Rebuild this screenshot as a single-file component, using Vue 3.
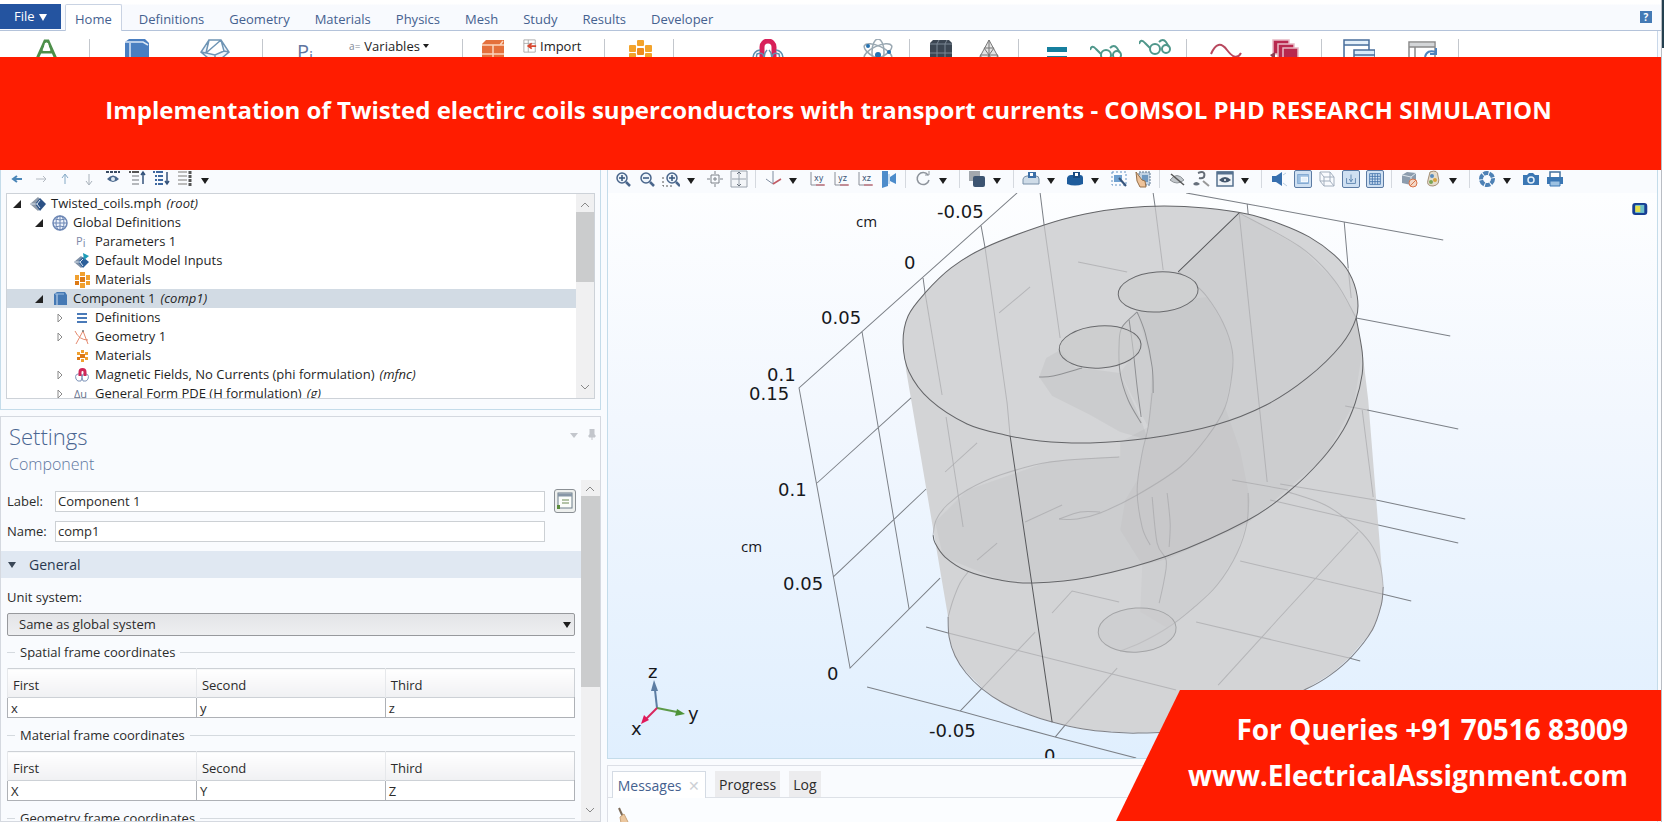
<script setup>
import { ref } from 'vue'

const tabs = ['Home', 'Definitions', 'Geometry', 'Materials', 'Physics', 'Mesh', 'Study', 'Results', 'Developer']

const art = {
  geomA: '<path d="M7 20L15 2h3l8 18M11 13h11" fill="none" stroke="#4d8f4a" stroke-width="3"/><path d="M15 4l-2 8h7l-2-8" fill="#fff"/>',
  cube: '<path d="M4 3l4-3h16l4 4v20H4z" fill="#4a7fc1"/><path d="M4 3h18l5 3M9 4v20" stroke="#dbe8f6" stroke-width="1.5" fill="none"/>',
  diamond: '<path d="M10 1h12l8 12-14 12L2 13zM10 1l-3 13 9 2 9-4-3-11M7 14l-5-1M25 12l5 1M7 14L22 1M16 16v8" fill="#eef5fb" stroke="#6f95b5" stroke-width="1.5"/>',
  brick: '<path d="M5 5l4-4h18v24H5z" fill="#e4703c"/><path d="M5 6h22M16 6v16M5 15h22M23 6l3-4" stroke="#fbd5bd" stroke-width="1.5" fill="none"/>',
  import: '<path d="M1 1h13v14H1zM1 5h13M6 1v14" fill="#fff" stroke="#a8a8a8"/><path d="M15 8H7m3-3L6 8l4 3" stroke="#d8472f" stroke-width="2" fill="none"/>',
  mats: '<g fill="#f3a32b"><rect x="12" y="1" width="7" height="6" rx="1"/><rect x="4" y="6" width="7" height="7" rx="1"/><rect x="20" y="6" width="7" height="7" rx="1"/><rect x="12" y="9" width="7" height="7" rx="1" fill="#ee8b1d"/><rect x="4" y="14" width="7" height="8" rx="1"/><rect x="20" y="14" width="7" height="8" rx="1"/></g>',
  magnet: '<path d="M10 20V8a6 6 0 0 1 12 0v12" fill="none" stroke="#d8215a" stroke-width="5"/><path d="M8 11Q1 12 1 20M24 11q7 1 7 9M12 20q0-8-7-5-1 3 0 6M20 20q0-8 7-5 1 3 0 6M15 11q-4 4-2 10M17 11q4 4 2 10" stroke="#5f8fae" stroke-width="1.5" fill="none"/>',
  atom: '<g fill="none" stroke="#9aa8b2" stroke-width="1.5"><ellipse cx="16" cy="13" rx="6" ry="13"/><ellipse cx="16" cy="13" rx="6" ry="15" transform="rotate(65 16 13)"/><ellipse cx="16" cy="13" rx="6" ry="15" transform="rotate(-65 16 13)"/></g><g fill="#2471b0"><circle cx="6" cy="7" r="2"/><circle cx="27" cy="13" r="2"/><circle cx="16" cy="16" r="3"/></g>',
  darkCube: '<path d="M5 4l3-3h16l3 3v20H5z" fill="#3b4652"/><path d="M5 5h22M12 5v18M20 5v18M12 5l2-4M20 5l2-4M5 14h22" stroke="#7b8794" fill="none"/>',
  tri: '<path d="M16 1L3 25h26zM16 1v24M11 9h10M7 16h18M11 9l5 7 5-7M7 16l5 8 4-8 5 8 4-8" fill="#e4e4e4" stroke="#777"/>',
  equal: '<rect x="6" y="8" width="20" height="5" fill="#167f9e"/><rect x="6" y="17" width="20" height="5" fill="#167f9e"/>',
  glasses: '<g fill="none" stroke="#4f978b" stroke-width="2"><circle cx="16" cy="10" r="5"/><circle cx="27" cy="10" r="4"/><path d="M0 5q2-6 6-1l5 5M20 3q4-4 7 0l3 5"/></g>',
  glassesLow: '<g fill="none" stroke="#4f978b" stroke-width="2"><circle cx="16" cy="16" r="5"/><circle cx="27" cy="16" r="4"/><path d="M0 11q2-6 6-1l5 5M20 9q4-4 7 0l3 5"/></g>',
  sine: '<path d="M1 15Q8-1 17 11t14 3" fill="none" stroke="#b8485e" stroke-width="2"/>',
  stack: '<g fill="#b8284e" stroke="#e7b9c5" stroke-width="1.5"><rect x="4" y="1" width="16" height="14"/><rect x="9" y="5" width="16" height="14"/><rect x="14" y="9" width="15" height="14"/></g><path d="M1 16l5-3v8z" fill="#8c4053"/>',
  windows: '<g fill="#fff" stroke="#4a6f9c" stroke-width="1.5"><path d="M1 1h25v20H1zM1 6h25" fill="#e4f0fa"/><path d="M2 7h23v14H2z" stroke="none"/><path d="M11 11h21v14H11zM11 16h21" fill="#d8eafa"/></g>',
  reset: '<path d="M2 3h26v22H2z" fill="#fff" stroke="#8b8b8b" stroke-width="1.5"/><path d="M3 4h24v4H3z" fill="#d4d6d8"/><path d="M2 8h26M8 8v17" stroke="#8b8b8b" stroke-width="1.5"/><path d="M18 18q2-8 11-5m0-4v6h-6" fill="none" stroke="#4d83bd" stroke-width="2"/>'
}

const ribbon = [
  { cls: 'g-center', icons: ['geomA'] },
  { cls: 'g-geo', icons: ['cube', 'diamond'] },
  { cls: 'g-vars', pi: true, variables: true, icons: [] },
  { cls: 'g-imp', icons: ['brick'], imp: true },
  { cls: 'g-mat', icons: ['mats'] },
  { cls: 'g-phys', icons: ['magnet', 'atom'] },
  { cls: 'g-mesh', icons: ['darkCube', 'tri'] },
  { cls: 'g-study', icons: ['equal', 'glassesLow', 'glasses'] },
  { cls: 'g-res', icons: ['sine', 'stack'] },
  { cls: 'g-win', icons: ['windows', 'reset'] }
]

const lens = '<circle cx="8" cy="8" r="5" fill="#eef4fa" stroke="#4a668c" stroke-width="1.5"/><path d="M12 12l4 4" stroke="#4a668c" stroke-width="2.5"/>'
const planeIcon = (t) => `<path d="M3 2v13h13" fill="none" stroke="#8a8f99" stroke-width="1"/><path d="M8 15h9" stroke="#c05560" stroke-width="1"/><text x="6" y="11" font-size="8" font-family="DejaVu Sans, sans-serif" fill="#3b5577">${t}</text>`
const small = {
  back: '<path d="M14 9H5m4-3L5 9l4 3" fill="none" stroke="#4b86b8" stroke-width="2"/>',
  fwd: '<path d="M4 9h10m-3-3l3 3-3 3" fill="none" stroke="#b4bac2" stroke-width="1"/>',
  up: '<path d="M9 14V5m-3 3l3-4 3 4" fill="none" stroke="#84a9c6" stroke-width="1"/>',
  down: '<path d="M9 4v10m-3-3l3 4 3-4" fill="none" stroke="#a9b2bb" stroke-width="1"/>',
  show: '<path d="M2 2h14" stroke="#3a4c63" stroke-width="2" stroke-dasharray="3 1"/><path d="M3 9q6-7 12 0-6 6-12 0z" fill="#4a678c"/><circle cx="9" cy="9" r="2" fill="#dfe9f3"/>',
  collapse: '<path d="M1 2h10" stroke="#555" stroke-width="2" stroke-dasharray="2 1 9 0"/><path d="M4 6h7M4 10h7M4 14h7" stroke="#b5b8bc" stroke-width="2"/><path d="M15 14V2m-2 3l2-3 2 3" fill="none" stroke="#36547c" stroke-width="1.5"/>',
  expand: '<path d="M1 2h10M3 6h8M3 10h8M3 14h8" stroke="#3e68a0" stroke-width="2" stroke-dasharray="2 1 9 0"/><path d="M15 2v12m-2-3l2 3 2-3" fill="none" stroke="#36547c" stroke-width="1.5"/>',
  list: '<path d="M2 2h9M2 6h9M2 10h9M2 14h9" stroke="#bbb" stroke-width="2"/><path d="M14 1v15" stroke="#555" stroke-width="3" stroke-dasharray="3 1"/>',
  zin: lens + '<path d="M5 8h6M8 5v6" stroke="#36547c" stroke-width="1.5"/>',
  zout: lens + '<path d="M5 8h6" stroke="#36547c" stroke-width="1.5"/>',
  zbox: '<path d="M1 7v9h10" fill="none" stroke="#555" stroke-dasharray="2 2"/><g transform="translate(2 0)">' + lens + '<path d="M5 8h6M8 5v6" stroke="#36547c" stroke-width="1.5"/></g>',
  ext: '<path d="M5 5h8v8H5zM9 1v3M9 14v3M1 9h3M14 9h3M7 9h4M9 7v4" fill="none" stroke="#7c8188"/>',
  fit: '<path d="M1 1h16v16H1zM9 2v14M2 9h14" fill="#f3f5f8" stroke="#9aa2ac" stroke-width="1"/><path d="M7 4l2-2 2 2M7 14l2 2 2-2" fill="none" stroke="#6b7480"/>',
  axes: '<path d="M9 1v12M9 14L2 9" stroke="#7f8ca0" fill="none"/><path d="M9 14l8-5" stroke="#c25a64" stroke-width="1.5"/>',
  xy: planeIcon('xy'), yz: planeIcon('yz'), xz: planeIcon('xz'),
  mirror: '<path d="M2 1h6v15l-6 2zM10 7l6-4v11l-6-3z" fill="#4d8ccb"/><path d="M9 4v10" stroke="#9cc3e6"/>',
  rot: '<path d="M14 5a6 6 0 1 0 1 5" fill="none" stroke="#8e949c" stroke-width="1.5"/><path d="M11 5h4V1" fill="none" stroke="#8e949c"/>',
  layers: '<rect x="1" y="1" width="11" height="10" fill="#a3a8ae"/><rect x="5" y="6" width="12" height="11" rx="2" fill="#3d5471"/>',
  tray: '<path d="M1 9q1-3 4-3h9q3 0 3 3v5H1z" fill="#cfdce8" stroke="#7990a8"/><path d="M6 2h8v6H6z" fill="#3c6fa8"/><path d="M8 3h3v3H8z" fill="#fff"/>',
  db: '<path d="M1 8q1-3 4-3h9q3 0 3 3v6q-8 3-16 0z" fill="#1e5c9c"/><path d="M7 2h7v6H7z" fill="#174a82"/><path d="M9 3h3v3H9z" fill="#fff"/>',
  sel: '<path d="M2 2h14v13H2z" fill="none" stroke="#6593c4" stroke-dasharray="2 2"/><rect x="4" y="5" width="8" height="7" fill="#6fa0d0"/><path d="M9 8l7 8" stroke="#36547c" stroke-width="2"/>',
  hand: '<path d="M5 2h11v13H5z" fill="#c3d3e3" stroke="#5c7690" stroke-dasharray="2 1"/><path d="M8 5h6v7H8z" fill="#6f98c0"/><path d="M2 2l6 8 3 1 1 6H6L3 11z" fill="#eec39a" stroke="#96704b"/>',
  hide: '<path d="M2 10q7-9 14 0-7 6-14 0z" fill="#c2c6ca" stroke="#8d9297"/><path d="M3 4l13 11" stroke="#555" stroke-width="1.5"/>',
  swap: '<path d="M6 3q8-3 6 4-2 2-5 1" fill="none" stroke="#666d77" stroke-width="2"/><path d="M1 14q3-4 7 0-4 3-7 0z" fill="#666f7b"/><path d="M11 11l6 5" stroke="#999" stroke-width="2"/>',
  eyewin: '<path d="M1 2h16v14H1z" fill="#f0f4f8" stroke="#56718f" stroke-width="1.5"/><path d="M1 3h16" stroke="#56718f" stroke-width="3"/><path d="M3 10q6-6 12 0-6 5-12 0z" fill="#44566c"/><circle cx="9" cy="10" r="1" fill="#fff"/>',
  light: '<path d="M2 6h4l6-4v14l-6-4H2z" fill="#376fae"/><path d="M13 13l4 3M13 5l3-2" stroke="#b9cde0"/>',
  scene: '<rect x="3" y="4" width="12" height="10" fill="#9fc0e2" stroke="#7fa6cf"/><rect x="7" y="7" width="7" height="5" fill="#e7f1fa" stroke="#fff"/>',
  wire: '<path d="M2 2h10v9H2zM6 7h10v9H6zM2 2l4 5M12 2l4 5M2 11l4 5M12 11l4 5" fill="none" stroke="#a3afbe"/>',
  orient: '<path d="M9 4v8M4 8v6h10V8M7 9l2 3 2-3" fill="none" stroke="#5b83ae"/>',
  grid: '<path d="M3 3h12v12H3zM6 3v12M9 3v12M12 3v12M3 6h12M3 9h12M3 12h12" fill="#d6e6f5" stroke="#4574ab"/>',
  nobox: '<path d="M2 5l5-3 9 1v9l-5 3-9-2z" fill="#8d9cad"/><path d="M2 5l9 2v8M11 7l5-4" stroke="#dfe6ec" fill="none"/><circle cx="13" cy="13" r="4" fill="#f3d8c8" stroke="#d9754a"/><path d="M10 16l6-6" stroke="#d9754a"/>',
  palette: '<path d="M6 2q8-3 8 4 3 9-5 10-7 0-5-6z" fill="#e5dccb" stroke="#a48f76"/><circle cx="8" cy="6" r="2" fill="#5a8dbd"/><circle cx="11" cy="10" r="2" fill="#d9a33d"/><circle cx="7" cy="12" r="2" fill="#7aa556"/>',
  aperture: '<circle cx="9" cy="9" r="6" fill="none" stroke="#4d81b5" stroke-width="4" stroke-dasharray="5 1"/>',
  camera: '<path d="M1 5h4l2-2h4l2 2h4v10H1z" fill="#3b77b4"/><circle cx="9" cy="10" r="3" fill="#3b77b4" stroke="#e3eef8" stroke-width="1.5"/>',
  print: '<path d="M4 2h10v6H4z" fill="#fff" stroke="#44719f" stroke-width="1.5"/><path d="M1 7h16v7H1z" fill="#3b77b4"/><path d="M4 11h10v5H4z" fill="#9cc1e2" stroke="#3b77b4"/>'
}
const treeTools = ['back', 'fwd', 'up', 'down', 'show', 'collapse', 'expand', 'list', '>']
const viewTools = ['zin', 'zout', 'zbox', '>', 'ext', 'fit', '|', 'axes', '>', 'xy', 'yz', 'xz', 'mirror', '|', 'rot', '>', '|', 'layers', '>', '|', 'tray', '>', 'db', '>', 'sel', 'hand', '|', 'hide', 'swap', 'eyewin', '>', '|', 'light', 'scene', 'wire', 'orient', 'grid', '|', 'nobox', 'palette', '>', '|', 'aperture', '>', 'camera', 'print']
const pressed = ['scene', 'orient', 'grid']

const t = {
  root: '<path d="M0 8l8-7 7 7-7 7z" fill="#8d99a8"/><path d="M5 8l5-6 6 6-6 7z" fill="#2c5286"/><path d="M1 8h6l3-4M7 8l3 4" stroke="#dbe5ef" fill="none"/>',
  globe: '<circle cx="8" cy="8" r="7" fill="#eef3fb" stroke="#6c86b4" stroke-width="1.5"/><path d="M8 1v14M1 8h14M3 4q5 2 10 0M3 12q5-2 10 0" fill="none" stroke="#6c86b4"/><ellipse cx="8" cy="8" rx="4" ry="7" fill="none" stroke="#6c86b4"/>',
  pi: '<text x="2" y="11" font-size="11" font-family="Open Sans, sans-serif" fill="#7d88a8">P<tspan dy="2">i</tspan></text>',
  inputs: '<path d="M0 9l7-6 7 6-7 6z" fill="#7e8fa6"/><path d="M4 9l5-5 6 5-6 6z" fill="#2c5f9a"/><path d="M9 0l6 3-5 4z" fill="#1f9cb8"/><path d="M1 9h5l3-3M6 9l3 4" stroke="#dbe5ef" fill="none"/>',
  mats: '<g fill="#f0a030"><rect x="6" y="0" width="5" height="4"/><rect x="1" y="3" width="4" height="5"/><rect x="12" y="3" width="4" height="5"/><rect x="6" y="5" width="5" height="5" fill="#dd7a16"/><rect x="1" y="9" width="4" height="4" fill="#dd7a16"/><rect x="12" y="9" width="4" height="4"/><rect x="6" y="11" width="5" height="5"/></g>',
  matsSmall: '<g fill="#f0a030"><rect x="7" y="2" width="3" height="3"/><rect x="3" y="4" width="3" height="3"/><rect x="11" y="4" width="3" height="3"/><rect x="6" y="6" width="5" height="4" fill="#dd7a16"/><rect x="3" y="9" width="3" height="3" fill="#dd7a16"/><rect x="11" y="9" width="3" height="3"/><rect x="7" y="11" width="3" height="3"/></g>',
  comp: '<path d="M2 3l3-2h8l2 3v10H2z" fill="#4579b4"/><path d="M5 3v11" stroke="#cfe0f2"/><path d="M3 3h9" stroke="#9dbfe2"/>',
  defs: '<path d="M3 4h10M3 8h10M3 12h10" stroke="#4a7ab8" stroke-width="2"/>',
  geo: '<path d="M2 15L9 2l5 13M1 2q4 9 13 9" fill="none" stroke="#e58a6f"/><circle cx="9" cy="2" r="1" fill="#777"/>',
  mag: '<path d="M2 12q-2-6 5-5 2 3 0 7-4 1-5-2zM14 12q2-6-5-5-2 3 0 7 4 1 5-2z" fill="#fff" stroke="#7d93b8"/><path d="M6 9V5a2 2 0 0 1 5 0v4" fill="none" stroke="#cf2658" stroke-width="3"/>',
  du: '<text x="0" y="12" font-size="11" font-family="Open Sans, sans-serif" fill="#66718c">Δu</text>'
}
const tree = [
  { lv: 0, open: 1, icon: t.root, label: 'Twisted_coils.mph', tag: '(root)' },
  { lv: 1, open: 1, icon: t.globe, label: 'Global Definitions' },
  { lv: 2, icon: t.pi, label: 'Parameters 1' },
  { lv: 2, icon: t.inputs, label: 'Default Model Inputs' },
  { lv: 2, icon: t.mats, label: 'Materials' },
  { lv: 1, open: 1, icon: t.comp, label: 'Component 1', tag: '(comp1)', sel: true },
  { lv: 2, open: 2, icon: t.defs, label: 'Definitions' },
  { lv: 2, open: 2, icon: t.geo, label: 'Geometry 1' },
  { lv: 2, icon: t.matsSmall, label: 'Materials' },
  { lv: 2, open: 2, icon: t.mag, label: 'Magnetic Fields, No Currents (phi formulation)', tag: '(mfnc)' },
  { lv: 2, open: 2, icon: t.du, label: 'General Form PDE (H formulation)', tag: '(g)' }
]

const label = ref('Component 1')
const name = ref('comp1')
const frames = [
  { title: 'Spatial frame coordinates', vals: ['x', 'y', 'z'] },
  { title: 'Material frame coordinates', vals: ['X', 'Y', 'Z'] },
  { title: 'Geometry frame coordinates', vals: ['Xg', 'Yg', 'Zg'] }
]

// Smooth curve through a list of points (Catmull-Rom converted to Bezier segments)
function curve(str, closed = false) {
  const p = str.split(' ').map((s) => s.split(',').map(Number))
  const n = p.length
  const at = (i) => (closed ? p[(i + n) % n] : p[Math.max(0, Math.min(n - 1, i))])
  let d = `M${p[0]}`
  for (let i = 0; i < (closed ? n : n - 1); i++) {
    const [a, b, c, e] = [at(i - 1), at(i), at(i + 1), at(i + 2)]
    d += `C${b[0] + (c[0] - a[0]) / 6},${b[1] + (c[1] - a[1]) / 6} ${c[0] - (e[0] - b[0]) / 6},${c[1] - (e[1] - b[1]) / 6} ${c}`
  }
  return closed ? d + 'Z' : d
}

const topRim = curve('903,343 908,316 925,293 951,268 984,248 1044,225 1085,214 1125,208 1164,206 1205,208 1247,214 1280,224 1309,237 1334,255 1349,273 1357,296 1356,318 1341,345 1307,378 1266,405 1215,425 1150,438 1090,443 1040,441 1005,435 967,424 930,400 909,372', true)
const body = 'M903,343L906,370L948,617L949,637L955,657L967,673L982,688L1000,702L1030,715L1052,722L1083,729L1100,731L1138,733L1190,730L1250,714L1306,689L1332,673L1349,658L1373,630L1382,603L1383,587L1368,400L1362,350L1356,318L1300,330L1000,330Z'
const bottomRim = curve('948,617 949,637 955,656 966,673 981,688 1003,703 1030,715 1052,722 1083,729 1110,732 1138,733 1190,730 1250,714 1306,689 1330,675 1352,656 1372,630 1381,605 1383,587')
const sheet = 'M1239,213L1178,272L1198,289L1137,312L1122,327L1141,343L1120,373L1148,427L1120,442L1120,456L1050,461L967,490L935,522L943,557L1000,580L1033,582L1090,578L1167,559L1248,523L1325,457L1354,403L1362,352L1356,318L1334,280L1300,247Z'
const blade = 'M1039,377L1046,358L1060,350L1075,367L1120,373L1141,420L1148,440L1120,432L1090,415L1052,396Z'
const twist = 'M1137,312L1178,300L1207,297L1223,323L1232,350L1232,373L1225,407L1240,450L1250,500L1247,522L1237,553L1217,585L1193,608L1167,628L1140,612L1142,565L1120,530L1125,500L1137,480L1142,453L1148,427L1152,367Z'

const darkCurves = [
  curve('1356,318 1362,352 1362,374 1355,403 1343,430 1321,460 1288,492 1248,520 1167,556 1090,577 1033,583 1000,580 967,571 945,557 935,543 933,535')
]
const faintCurves = [
  curve('933,535 936,520 947,505 967,490 1000,475 1050,462 1119,457'),
  curve('1239,213 1300,247 1334,280 1356,318'),
  curve('948,617 953,600 960,583 968,572'),
  curve('1288,492 1325,505 1352,524 1370,543 1380,565 1383,587'),
  curve('1178,272 1193,283 1207,297 1223,323 1232,350 1232,373 1225,407 1207,437 1180,467 1137,495 1100,513 1077,519 1059,519'),
  curve('1059,519 1080,512 1100,512'),
  curve('1152,393 1148,427 1142,453 1137,490 1142,527 1150,545'),
  curve('1152,497 1157,543 1166,560 1164,580 1159,603'),
  curve('1167,493 1170,523 1169,547'),
  curve('1248,493 1247,522 1237,553 1217,585 1193,608 1167,628 1140,643 1120,651'),
  'M985,248L1007,403L1010,436M925,293L942,395M946,417L963,527M1044,225L1060,338M1155,207L1163,270M1239,213L1259,405L1267,482M1348,268L1351,298M1362,410L1373,497',
  'M948,633L1100,671L1176,690M982,688L1035,632M1052,613L1072,591L1119,602M1065,725L1117,668M1218,685L1279,618L1358,532M1196,622L1349,658M1240,561L1382,594M1270,500L1378,525M1232,480L1288,490M1280,484L1375,500M1345,406L1367,410M945,472L977,443M1030,287L999,313M1078,262L1127,272M977,560L997,543M1025,522L1062,505'
]
const midCurves = [
  curve('1137,312 1145,333 1152,367 1153,393'),
  curve('1137,312 1122,327 1119,343 1120,373 1128,400 1141,423'),
  curve('1129,320 1133,350 1137,387 1141,417'),
  curve('1039,377 1053,376 1082,368')
]
const gridLines = 'M1017,193L799,388L850,668L940,578M981,226L985,248M923,278L925,293M862,332L909,609M1040,193L1044,225M1153,193L1155,207M817,483L911,398M833,577L926,489M1186,193L1247,204L1344,222L1443,240M1247,204L1248,214M1344,222L1348,268M1356,318L1450,336M1367,410L1458,429M1376,500L1465,519M1378,525L1458,543M1382,594L1411,601M1349,658L1360,661M926,627L948,633M867,687L960,711L1055,737L1136,758M960,711L982,688M1055,737L1065,725'
const ticks = [
  [937, 218, '-0.05'], [904, 269, '0'], [821, 324, '0.05'], [767, 381, '0.1'], [749, 400, '0.15'],
  [778, 496, '0.1'], [783, 590, '0.05'], [827, 680, '0'], [929, 737, '-0.05'], [1044, 762, '0']
]
const axisNames = [[648, 678, 'z'], [688, 720, 'y'], [631, 735, 'x']]
</script>

<template>
  <div class="screen">
    <div class="app">
      <header class="tabbar">
        <button class="file">File <span class="tri-w"></span></button>
        <nav class="tabs">
          <button v-for="(x, i) in tabs" :key="x" :class="['tab', { on: i === 0 }]">{{ x }}</button>
        </nav>
        <button class="help">?</button>
      </header>

      <div class="ribbon">
        <div v-for="g in ribbon" :key="g.cls" :class="['group', g.cls]">
          <button v-if="g.pi" class="pi" aria-label="Parameters"><span>P</span><sub>i</sub></button>
          <button v-if="g.variables" class="cmd"><span class="aeq">a=</span>Variables <span class="caret small"></span></button>
          <button v-for="ic in g.icons" :key="ic" class="big" :aria-label="ic">
            <svg viewBox="0 0 32 26" width="32" height="26" v-html="art[ic]"></svg>
          </button>
          <button v-if="g.imp" class="cmd imp"><svg viewBox="0 0 16 16" width="14" height="14" v-html="art.import"></svg>Import</button>
        </div>
      </div>

      <h1 class="banner">Implementation of Twisted electirc coils superconductors with transport currents - COMSOL PHD RESEARCH SIMULATION</h1>

      <main class="work">
        <div class="left">
          <section class="panel builder">
            <div class="toolbar">
              <button v-for="k in treeTools" :key="k" :class="k === '>' ? 'drop' : 'tool'" :aria-label="k">
                <span v-if="k === '>'" class="caret"></span>
                <svg v-else viewBox="0 0 18 18" width="18" height="18" v-html="small[k]"></svg>
              </button>
            </div>
            <div class="treebox">
              <ul class="tree">
                <li v-for="(r, i) in tree" :key="i" :class="['row', 'lv' + r.lv, { sel: r.sel }]">
                  <span class="toggle">
                    <svg v-if="r.open === 1" viewBox="0 0 8 8" width="8" height="8"><path d="M8 0v8H0z" fill="#222" /></svg>
                    <svg v-if="r.open === 2" viewBox="0 0 6 10" width="6" height="10"><path d="M1 1l4 4-4 4z" fill="#fff" stroke="#8a8a8a" /></svg>
                  </span>
                  <svg class="ticon" viewBox="0 0 16 16" width="16" height="16" v-html="r.icon"></svg>
                  <span>{{ r.label }}</span><i v-if="r.tag">{{ r.tag }}</i>
                </li>
              </ul>
              <div class="vbar">
                <svg viewBox="0 0 10 6" width="10" height="6"><path d="M1 5l4-4 4 4" fill="none" stroke="#888" /></svg>
                <div class="thumb tree-thumb"></div>
                <svg class="end" viewBox="0 0 10 6" width="10" height="6"><path d="M1 1l4 4 4-4" fill="none" stroke="#888" /></svg>
              </div>
            </div>
          </section>

          <section class="panel settings">
            <div class="shead">
              <div>
                <h2>Settings</h2>
                <p class="sub">Component</p>
              </div>
              <div class="pins">
                <span class="caret pale"></span>
                <svg viewBox="0 0 8 12" width="8" height="12"><path d="M2 0h4v6h1v2H1V6h1zM4 8v3" fill="#c3c6cc" stroke="#c3c6cc" /></svg>
              </div>
            </div>
            <div class="sbody">
              <div class="form">
                <div class="line">
                  <label for="f-label">Label:</label>
                  <input id="f-label" v-model="label" type="text" />
                  <button class="show" aria-label="Show name">
                    <svg viewBox="0 0 16 18" width="16" height="18"><rect x="1" y="1" width="14" height="15" fill="#fbfdfa" stroke="#6d7d8a" /><path d="M1 3h14" stroke="#8796a6" stroke-width="3" /><path d="M5 8h7M5 11h7" stroke="#6d8a55" /><rect x="0" y="13" width="3" height="4" fill="#5c8d3d" /></svg>
                  </button>
                </div>
                <div class="line">
                  <label for="f-name">Name:</label>
                  <input id="f-name" v-model="name" type="text" />
                  <span class="show-gap"></span>
                </div>
                <h3 class="section"><span class="caret dark"></span>General</h3>
                <label class="unit" for="f-unit">Unit system:</label>
                <div class="selwrap">
                  <select id="f-unit"><option>Same as global system</option></select>
                  <span class="caret"></span>
                </div>
                <div v-for="f in frames" :key="f.title" class="frame">
                  <div class="legend">{{ f.title }}</div>
                  <table>
                    <thead><tr><th>First</th><th>Second</th><th>Third</th></tr></thead>
                    <tbody><tr><td v-for="v in f.vals" :key="v">{{ v }}</td></tr></tbody>
                  </table>
                </div>
              </div>
              <div class="vbar wide">
                <svg viewBox="0 0 10 6" width="10" height="6"><path d="M1 5l4-4 4 4" fill="none" stroke="#888" /></svg>
                <div class="thumb set-thumb"></div>
                <svg class="end" viewBox="0 0 10 6" width="10" height="6"><path d="M1 1l4 4 4-4" fill="none" stroke="#888" /></svg>
              </div>
            </div>
          </section>
        </div>

        <div class="right">
          <section class="panel graphics">
            <div class="toolbar view">
              <template v-for="(k, i) in viewTools" :key="i">
                <span v-if="k === '|'" class="sep"></span>
                <button v-else-if="k === '>'" class="drop" aria-label="More"><span class="caret"></span></button>
                <button v-else :class="['tool', { pressed: pressed.includes(k) }]" :aria-label="k">
                  <svg viewBox="0 0 18 18" width="18" height="18" v-html="small[k]"></svg>
                </button>
              </template>
            </div>
            <div class="canvas">
              <svg viewBox="608 193 1049 565" preserveAspectRatio="xMidYMid slice">
                <path :d="body" fill="#d3d4d6" />
                <path :d="topRim" fill="#d4d5d7" />
                <path :d="sheet" fill="#000" opacity="0.03" />
                <path :d="blade" fill="#000" opacity="0.04" />
                <path :d="twist" fill="#000" opacity="0.02" />
                <g fill="none" stroke-width="1">
                  <path v-for="(d, i) in faintCurves" :key="'f' + i" :d="d" stroke="#a4a5a8" stroke-opacity="0.65" />
                  <path v-for="(d, i) in midCurves" :key="'m' + i" :d="d" stroke="#8f9093" />
                  <path :d="gridLines" stroke="#7c8087" />
                  <path :d="topRim" stroke="#646568" />
                  <path :d="bottomRim" stroke="#808186" />
                  <path v-for="(d, i) in darkCurves" :key="'d' + i" :d="d" stroke="#646568" />
                  <path d="M1010,436L1052,722M1239,213L1178,272" stroke="#58595c" />
                  <g stroke="#68696c">
                    <ellipse cx="1158" cy="292" rx="40" ry="20" transform="rotate(-4 1158 292)" fill="#cfd0d1" />
                    <ellipse cx="1100" cy="347" rx="41" ry="21" transform="rotate(-4 1100 347)" fill="#c8c9ca" fill-opacity="0.6" />
                  </g>
                  <ellipse cx="1137" cy="630" rx="39" ry="22" transform="rotate(-4 1137 630)" fill="#c9cacc" fill-opacity="0.5" stroke="#a3a4a6" />
                </g>
                <g class="tick">
                  <text v-for="k in ticks" :key="k.join()" :x="k[0]" :y="k[1]">{{ k[2] }}</text>
                  <text v-for="k in axisNames" :key="k[2]" :x="k[0]" :y="k[1]">{{ k[2] }}</text>
                </g>
                <g class="unit-text"><text x="856" y="227">cm</text><text x="741" y="552">cm</text></g>
                <g stroke-width="2">
                  <path d="M657 708l-2-18" stroke="#5c7da3" /><path d="M654 680l4 11h-7z" fill="#5c7da3" />
                  <path d="M657 708l20 4" stroke="#5c9a48" /><path d="M685 714l-10 2 2-7z" fill="#4d9338" />
                  <path d="M657 708l-11 11" stroke="#d8275e" /><path d="M641 724l3-9 5 5z" fill="#e0195a" />
                </g>
                <g>
                  <rect x="1632" y="203" width="15" height="12" rx="3" fill="#173f94" />
                  <rect x="1635" y="205" width="9" height="8" fill="#6fc0c8" />
                  <rect x="1635" y="206" width="5" height="6" fill="#e6de4c" />
                </g>
              </svg>
            </div>
          </section>

          <section class="panel messages">
            <div class="mtabs">
              <button class="mtab on">Messages <span class="x">✕</span></button>
              <button class="mtab">Progress</button>
              <button class="mtab">Log</button>
            </div>
            <div class="mbody">
              <svg viewBox="0 0 20 26" width="20" height="26"><path d="M1 1l4 9" stroke="#7b6a58" stroke-width="2" /><path d="M2 10l4-3 6 12-8 4z" fill="#ecc79e" stroke="#c9a57c" /></svg>
            </div>
          </section>
        </div>
      </main>
    </div>
    <div class="edge"><div class="edge-top"></div></div>

    <div class="contact">
      <p>For Queries +91 70516 83009</p>
      <p>www.ElectricalAssignment.com</p>
    </div>
  </div>
</template>

<style>
html, body { margin: 0; overflow: hidden; }
</style>

<style scoped>
* { box-sizing: border-box; }
button { font: inherit; color: inherit; background: none; border: 0; padding: 0; margin: 0; }
p, h1, h2, h3, ul { margin: 0; padding: 0; font-weight: inherit; }
svg { display: block; }
.screen { position: relative; display: flex; height: 100vh; overflow: hidden; background: #fff; color: #2b2b2b; font: 13px/19px "Open Sans", "Noto Sans", sans-serif; }
.app { flex: 1; min-width: 0; display: flex; flex-direction: column; background: #f9fbfe; }
.edge { flex: none; width: 3px; border-left: 1px solid #b9bdc4; background: #fff; }
.edge-top { height: 48px; background: #24404f; }

.tabbar { display: flex; height: 31px; padding-top: 4px; border-bottom: 1px solid #b4c3da; background: linear-gradient(#fff 4px, #f8fafe 5px); }
.file { width: 61px; height: 25px; background: #2454a0; color: #fff; }
.tri-w { display: inline-block; margin-left: 1px; border: 4px solid transparent; border-top: 7px solid #fff; border-bottom: 0; }
.tabs { flex: 1; display: flex; padding-left: 4px; color: #45618f; }
.tab { height: 27px; padding: 3px 12px 0 11px; border: 1px solid transparent; }
.tab.on { padding: 2px 9px 0; margin-right: 5px; border-color: #c9d3e3; border-bottom: 0; background: #fff; border-radius: 2px 2px 0 0; }
.help { width: 12px; height: 12px; margin: 7px 9px 0 0; background: #447ab5; color: #fff; font: bold 10px/12px "Open Sans", sans-serif; }

.ribbon { display: flex; height: 26px; margin-right: 3px; padding-top: 8px; overflow: hidden; background: #fff; border-right: 1px solid #c9d8ea; }
.group { flex: none; display: flex; height: 30px; border-right: 1px solid #c3c7cd; }
.big { flex: none; height: 26px; }
.g-center { width: 90px; padding-left: 30px; }
.g-geo { width: 173px; padding-left: 31px; gap: 46px; }
.g-vars { width: 200px; padding-left: 34px; gap: 36px; }
.g-imp { width: 142px; padding-left: 14px; gap: 14px; }
.g-mat { width: 69px; padding-left: 20px; }
.g-phys { width: 236px; padding-left: 78px; gap: 78px; }
.g-mesh { width: 109px; padding-left: 15px; gap: 16px; }
.g-study { width: 168px; padding-left: 22px; gap: 17px; }
.g-res { width: 135px; padding-left: 23px; gap: 27px; }
.g-win { width: 137px; padding-left: 21px; gap: 32px; }
.pi { height: 26px; color: #5f759f; font-size: 20px; line-height: 26px; }
.pi sub { font-size: 16px; vertical-align: -4px; }
.cmd { display: flex; align-items: center; height: 14px; color: #1d1d1d; }
.aeq { margin-right: 4px; font-size: 10px; color: #7f8894; }
.imp { gap: 3px; }

.caret { display: inline-block; flex: none; border: 4px solid transparent; border-top: 6px solid #1d1d1d; border-bottom: 0; }
.caret.small { border-width: 4px 3px 0; margin-left: 3px; }
.caret.pale { border-top-color: #c3c6cc; border-top-width: 5px; }
.caret.dark { border-top-color: #3a4757; }

.banner { flex: none; display: flex; align-items: center; justify-content: center; height: 113px; padding: 0 4px 8px 0; background: #ff1c00; color: #fff; font: bold 24px/32px "Open Sans", "Noto Sans", sans-serif; white-space: nowrap; }

.work { flex: 1; min-height: 0; display: grid; grid-template-columns: minmax(0, 4fr) minmax(0, 7fr); gap: 6px; margin-right: 3px; }
.left, .right { display: flex; flex-direction: column; gap: 6px; min-height: 0; min-width: 0; }
.panel { border: 1px solid #c4dcea; }
.builder, .graphics { border-top: 0; }
.toolbar { display: flex; align-items: center; height: 23px; padding: 0 0 5px 4px; }
.toolbar.view { padding-left: 3px; }
.tool { flex: none; display: flex; align-items: center; justify-content: center; width: 24px; height: 18px; }
.tool.pressed svg { background: #cfe0f2; border: 1px solid #5c7ba3; border-radius: 2px; }
.drop { flex: none; width: 20px; height: 18px; padding-right: 4px; line-height: 14px; text-align: center; }
.sep { flex: none; width: 1px; height: 18px; margin: 0 5px 0 4px; background: #d5d9df; }

.treebox { display: flex; height: 206px; margin: 0 5px 10px 5px; border: 1px solid #cdd2d8; background: #fff; overflow: hidden; }
.tree { flex: 1; min-width: 0; list-style: none; color: #1f1f1f; }
.row { display: flex; align-items: center; height: 19px; white-space: nowrap; }
.row.sel { background: #d2dbe4; }
.row i { margin-left: 5px; }
.lv0 { padding-left: 6px; }
.lv1 { padding-left: 28px; }
.lv2 { padding-left: 50px; }
.toggle { flex: none; display: flex; width: 13px; height: 12px; align-items: center; }
.ticon { flex: none; margin: 0 5px 0 4px; }
.vbar { flex: none; display: flex; flex-direction: column; align-items: center; width: 18px; padding: 8px 0; background: #f0f0f1; }
.vbar .end { margin-top: auto; }
.thumb { width: 100%; background: #cbcccd; }
.tree-thumb { height: 70px; margin-top: 4px; }

.settings { flex: 1; min-height: 0; display: flex; flex-direction: column; border-color: #d5d9e0; }
.shead { display: flex; justify-content: space-between; height: 63px; padding: 3px 4px 0 8px; }
h2 { color: #4a6591; font-size: 22px; line-height: 32px; font-weight: 300; }
.sub { color: #5f779f; font-size: 16px; line-height: 24px; font-weight: 300; }
.pins { display: flex; align-items: center; gap: 10px; height: 30px; }
.sbody { flex: 1; min-height: 0; display: flex; overflow: hidden; }
.form { flex: 1; min-width: 0; padding-top: 9px; }
.line { display: flex; align-items: center; height: 24px; margin: 0 5px 6px 6px; }
.line label { width: 48px; }
.line input { flex: 1; min-width: 0; height: 21px; padding: 0 2px; border: 1px solid #ccd0d4; background: #fff; font: inherit; color: inherit; }
.show { display: flex; align-items: center; justify-content: center; width: 22px; height: 24px; margin-left: 9px; border: 1px solid #8b9095; border-radius: 3px; background: #eef0ee; }
.show-gap { width: 31px; }
.section { display: flex; align-items: center; gap: 13px; height: 27px; margin-top: 8px; padding-left: 7px; background: #e0e8f2; font-size: 14px; color: #2a3950; }
.unit { display: block; margin: 10px 0 6px 6px; }
.selwrap { position: relative; margin: 0 6px; }
.selwrap select { display: block; width: 100%; height: 23px; padding: 0 11px; appearance: none; border: 1px solid #97999d; border-radius: 2px; background: linear-gradient(#e3e4e7, #eeeff1); font: inherit; color: inherit; }
.selwrap .caret { position: absolute; right: 4px; top: 9px; }
.frame { margin: 6px 6px 0; }
.legend { display: flex; align-items: center; gap: 5px; height: 21px; margin-bottom: 5px; }
.legend::before, .legend::after { content: ""; height: 1px; background: #d5dadf; }
.legend::before { width: 8px; }
.legend::after { flex: 1; }
table { width: 100%; table-layout: fixed; border-collapse: collapse; border: 1px solid #cdd1d6; margin-bottom: 7px; }
th { height: 29px; padding: 5px 5px 0; text-align: left; font-weight: normal; background: linear-gradient(#fff, #f0f1f3); border-left: 1px solid #e6e8eb; }
td { height: 20px; padding: 0 4px 0 3px; line-height: 18px; background: #fff; border: 1px solid #aeb1b6; border-top-color: #cdd1d6; }
.wide { width: 19px; padding-top: 6px; }
.set-thumb { height: 191px; margin-top: 4px; }

.graphics { flex: 1; min-height: 0; display: flex; flex-direction: column; }
.canvas { flex: 1; min-height: 0; background: linear-gradient(#fdfeff, #f2f7fe 40%, #e0effe); }
.canvas svg { width: 100%; height: 100%; }
.tick { font: 18px "DejaVu Sans", sans-serif; fill: #16181c; }
.unit-text { font: 15px "Open Sans", sans-serif; fill: #16181c; }

.messages { height: 57px; flex: none; border-bottom: 0; border-color: #dcdfe6; }
.mtabs { display: flex; gap: 9px; height: 32px; padding: 5px 0 0 4px; border-bottom: 1px solid #dde1e7; font-size: 14px; color: #2b2b2b; }
.mtab { height: 26px; padding: 0 4px; background: #ececee; }
.mtab.on { height: 27px; padding: 0 5px; background: #fff; border: 1px solid #d4dbe4; border-bottom: 0; color: #45618f; }
.x { margin-left: 3px; color: #cdd0d5; }
.mbody { padding: 9px 0 0 10px; background: #fbfdff; }

.contact { position: absolute; right: 3px; bottom: 1px; width: 545px; height: 131px; padding: 16px 33px 0 0; background: #ff1c00; clip-path: polygon(64px 0, 100% 0, 100% 100%, 0 100%); color: #fff; text-align: right; font: bold 28px/46px "Open Sans", "Noto Sans", sans-serif; white-space: nowrap; }
</style>
